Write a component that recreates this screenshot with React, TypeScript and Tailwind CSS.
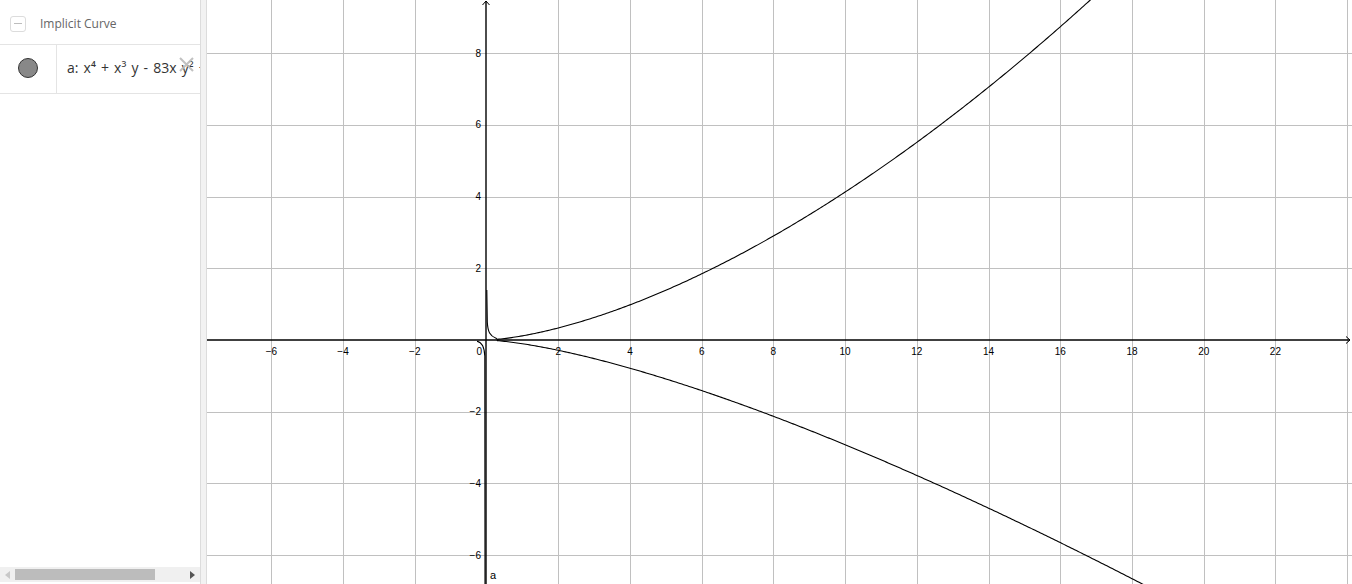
import React from "react";

// graph geometry (page pixels)
const OX = 486.5;
const OY = 340;
const S = 35.86;
const AXIS_X = 486;

const px = (x: number) => OX + S * x;
const py = (y: number) => OY - S * y;

// main branches of 83y² − x²y − x³ = 0
const branch = (sign: number, from: number, to: number) => {
  const pts: string[] = [];
  for (let x = from; x <= to; x += 0.05) {
    const y = (x * x + sign * Math.sqrt(x ** 4 + 332 * x ** 3)) / 166;
    pts.push(`${px(x).toFixed(2)},${py(y).toFixed(2)}`);
  }
  return pts;
};

const upper = branch(1, 0.3, 17.2);
const lower = branch(-1, 0.3, 18.4);

const xTicks = [-6, -4, -2, 2, 4, 6, 8, 10, 12, 14, 16, 18, 20, 22];
const yTicks = [8, 6, 4, 2, -2, -4, -6];

const snap = (v: number) => Math.round(v) + 0.5;

const Graphics = () => {
  const vLines: number[] = [];
  for (let k = -3; k <= 12; k++) if (k !== 0) vLines.push(snap(px(2 * k)));
  const hLines: number[] = [];
  for (let k = -3; k <= 4; k++) if (k !== 0) hLines.push(snap(py(2 * k)));

  return (
    <svg
      className="block h-full w-full"
      viewBox="207 0 1145 584"
      style={{ fontFamily: '"Liberation Sans", Arial, sans-serif' }}
    >
      <g stroke="#c0c0c0" strokeWidth="1" shapeRendering="crispEdges">
        {vLines.map((x) => (
          <line key={`v${x}`} x1={x} y1={0} x2={x} y2={584} />
        ))}
        {hLines.map((y) => (
          <line key={`h${y}`} x1={207} y1={y} x2={1352} y2={y} />
        ))}
      </g>

      {/* axes */}
      <g stroke="#000" strokeWidth="1.4" fill="none">
        <line x1={207} y1={OY} x2={1350} y2={OY} />
        <line x1={AXIS_X} y1={1} x2={AXIS_X} y2={584} />
        <polyline points={`${AXIS_X - 3.5},5 ${AXIS_X},1 ${AXIS_X + 3.5},5`} strokeWidth="1" />
        <polyline points={`1346,${OY - 3.5} 1350,${OY} 1346,${OY + 3.5}`} strokeWidth="1" />
      </g>

      {/* tick labels */}
      <g fontSize="10" fill="#000">
        {xTicks.map((t) => (
          <text key={`x${t}`} x={px(t)} y={354.5} textAnchor="middle">
            {t < 0 ? `\u2212${-t}` : t}
          </text>
        ))}
        <text x={482} y={354.5} textAnchor="end">
          0
        </text>
        {yTicks.map((t) => (
          <text key={`y${t}`} x={481} y={py(t) + 3.5} textAnchor="end">
            {t < 0 ? `\u2212${-t}` : t}
          </text>
        ))}
      </g>

      {/* curve a */}
      <g stroke="#000" strokeWidth="1.1" fill="none" strokeLinejoin="round">
        <path d={`M486.8,290 L487.3,322 C487.8,332 490,336 496,338.2 L${upper.join(" L")}`} />
        <path d={`M498,339.8 L${lower.join(" L")}`} />
        <path d="M477,341.2 C481,342 484.4,345 484.8,356 L485,584" />
      </g>
      <text x={490} y={579} fontSize="11" fill="#000">
        a
      </text>
    </svg>
  );
};

const AlgebraPanel = () => (
  <div
    className="relative flex h-full w-[200px] shrink-0 flex-col bg-white"
    style={{ fontFamily: '"Open Sans", "Noto Sans", sans-serif' }}
  >
    <div className="flex h-[45px] items-center border-b border-[#e4e4e4] pl-[10px] pt-[3px]">
      <div className="flex h-[16px] w-[16px] items-center justify-center rounded-[3px] border border-[#dcdcdc]">
        <div className="h-[1px] w-[8px] bg-[#bdbdbd]" />
      </div>
      <span className="ml-[14px] text-[12px] text-[#666]">Implicit Curve</span>
    </div>
    <div className="flex h-[49px] border-b border-[#e4e4e4]">
      <div className="flex w-[57px] shrink-0 items-center justify-center border-r border-[#e4e4e4] pb-[2px]">
        <div className="h-[20px] w-[20px] rounded-full border border-[#333] bg-[#888]" />
      </div>
      <div className="relative flex flex-1 items-center overflow-hidden pb-[4px] pl-[10px]">
        <span className="whitespace-nowrap text-[14px] text-[#333] [word-spacing:1.5px]">
          a: x⁴ + x³ y - 83x y² +
        </span>
        <svg className="absolute left-[121px] top-[11px]" width="17" height="17" viewBox="0 0 17 17">
          <path d="M2 2 L15 15 M15 2 L2 15" stroke="#bbb" strokeWidth="2" opacity="0.9" />
        </svg>
      </div>
    </div>
    <div className="flex-1" />
    <div className="mb-[2px] flex h-[15px] items-center bg-[#f0f0f0]">
      <div className="flex w-[15px] items-center justify-center">
        <div className="h-0 w-0 border-y-[4px] border-r-[5px] border-y-transparent border-r-[#c8c8c8]" />
      </div>
      <div className="h-[11px] w-[140px] bg-[#bcbcbc]" />
      <div className="flex-1" />
      <div className="flex w-[15px] items-center justify-center">
        <div className="h-0 w-0 border-y-[4px] border-l-[5px] border-y-transparent border-l-[#555]" />
      </div>
    </div>
  </div>
);

export default function App() {
  return (
    <div className="flex h-[584px] w-[1352px] overflow-hidden bg-white">
      <AlgebraPanel />
      <div className="h-full w-[7px] shrink-0 border-x border-[#dcdcdc] bg-[#f2f2f2]" />
      <div className="h-full flex-1">
        <Graphics />
      </div>
    </div>
  );
}
